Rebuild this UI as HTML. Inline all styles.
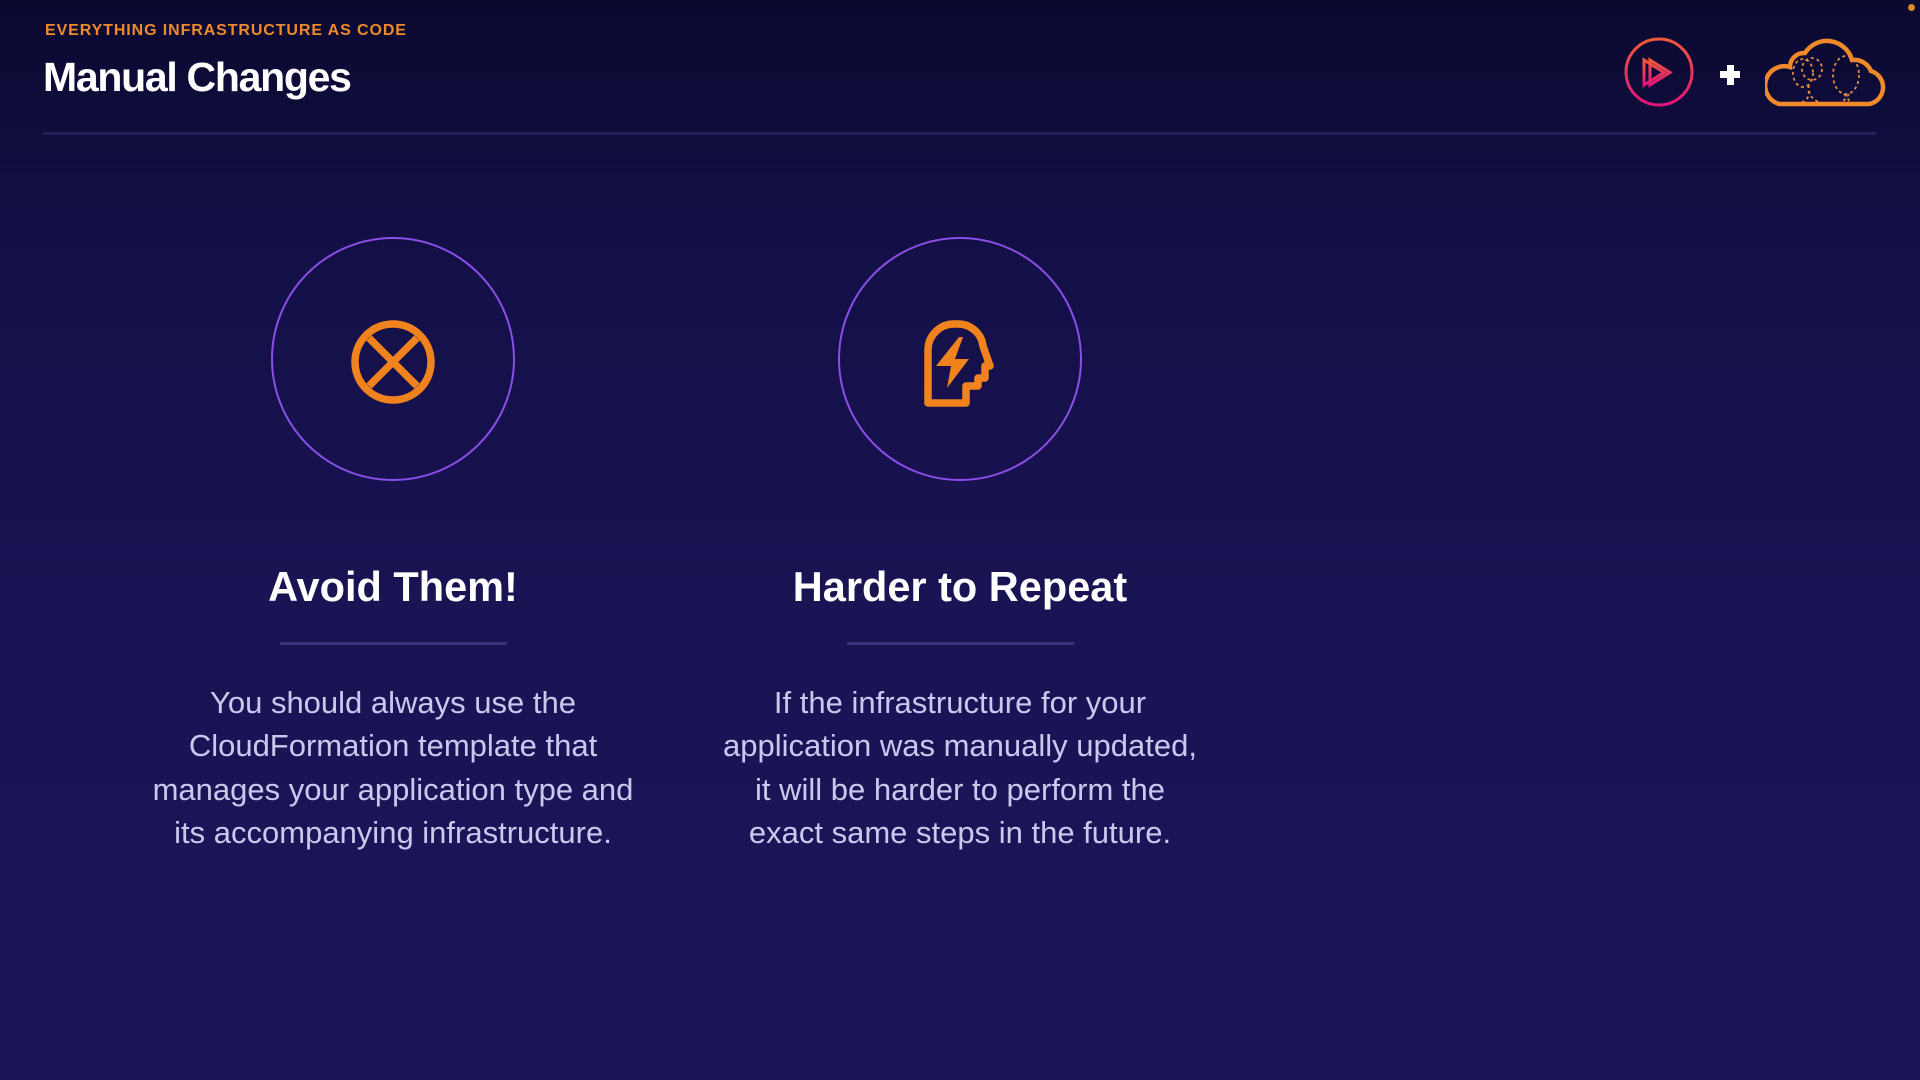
<!DOCTYPE html>
<html><head><meta charset="utf-8"><style>
html,body{margin:0;padding:0}
body{width:1920px;height:1080px;position:relative;overflow:hidden;font-family:"Liberation Sans",sans-serif;
background:linear-gradient(180deg,#0b0930 0%,#141048 25%,#1a1455 60%,#1c1558 100%);}
.sub{position:absolute;left:45px;top:22px;font-size:16px;font-weight:bold;color:#ef8a2a;letter-spacing:0.9px}
.title{position:absolute;left:43px;top:54px;font-size:41px;font-weight:bold;color:#fff;letter-spacing:-1.3px}
.hr{position:absolute;left:43px;top:132px;width:1833px;height:3px;background:#252058}
.circ{position:absolute;width:244px;height:244px;border:2px solid #8b4ee8;border-radius:50%;box-sizing:border-box}
.h{position:absolute;width:600px;text-align:center;font-size:41.5px;font-weight:bold;color:#fff;top:563px}
.sl{position:absolute;top:642px;width:227px;height:3px;background:#39337a}
.p{position:absolute;width:600px;text-align:center;font-size:31px;line-height:43.3px;color:#cbc8ee;top:681px}
</style></head><body>
<div class="sub">EVERYTHING INFRASTRUCTURE AS CODE</div>
<div class="title">Manual Changes</div>
<div class="hr"></div>
<svg style="position:absolute;left:1620px;top:35px" width="80" height="80" viewBox="0 0 80 80">
<defs><linearGradient id="g" x1="0" y1="0" x2="0" y2="1"><stop offset="0" stop-color="#f05a3a"/><stop offset="1" stop-color="#e0157a"/></linearGradient></defs>
<circle cx="39" cy="37" r="33" fill="none" stroke="url(#g)" stroke-width="3"/>
<path d="M24 25 L24 50 L44 37.5 Z" fill="none" stroke="url(#g)" stroke-width="3"/>
<path d="M30 25 L30 50 L50 37.5 Z" fill="none" stroke="url(#g)" stroke-width="3"/>
</svg>
<div style="position:absolute;left:1720px;top:71px;width:20px;height:7px;background:#fff"></div>
<div style="position:absolute;left:1726.5px;top:64.5px;width:7px;height:20px;background:#fff"></div>
<svg style="position:absolute;left:1765px;top:35px" width="125" height="75" viewBox="0 0 125 75">
<path d="M14 69 H104 A17 17 0 0 0 106 36 A18 18 0 0 0 87 25 A26 26 0 0 0 40 18 A14 14 0 0 0 25 32 A19 19 0 0 0 14 69 Z" fill="none" stroke="#f0892a" stroke-width="4.5"/>
<g fill="none" stroke="#e08a45" stroke-width="1.8" stroke-dasharray="3 3">
<ellipse cx="38" cy="38" rx="10" ry="14"/><ellipse cx="47" cy="34" rx="10" ry="11"/>
<path d="M43 50 Q48 62 36 68 M44 50 Q40 60 55 68"/>
<ellipse cx="81" cy="40" rx="13" ry="19"/><path d="M79 59 L86 68 M84 59 L77 68"/>
</g>
</svg>
<div style="position:absolute;left:1908px;top:4px;width:7px;height:7px;border-radius:50%;background:#d98a2c"></div>

<div class="circ" style="left:271px;top:237px"></div>
<svg style="position:absolute;left:343px;top:312px" width="100" height="100" viewBox="0 0 100 100">
<circle cx="50" cy="50" r="38" fill="none" stroke="#f1831f" stroke-width="7.5"/>
<path d="M26 26 L74 74 M74 26 L26 74" stroke="#f1831f" stroke-width="7.5"/>
</svg>
<div class="circ" style="left:838px;top:237px"></div>
<svg style="position:absolute;left:915px;top:318px" width="90" height="95" viewBox="915 318 90 95">
<path d="M928 403 V350 A26 26 0 0 1 954 324 H958 A25 25 0 0 1 983 346 L990 366 H985 V378 H978 V386 H966 V403 Z" fill="none" stroke="#f1831f" stroke-width="7.5" stroke-linejoin="round"/>
<path d="M959 337 L936 366 H951 L947 388 L969 359 H955 L963 337 Z" fill="#f1831f"/>
</svg>

<div class="h" style="left:93px">Avoid Them!</div>
<div class="sl" style="left:280px"></div>
<div class="p" style="left:93px">You should always use the<br>CloudFormation template that<br>manages your application type and<br>its accompanying infrastructure.</div>

<div class="h" style="left:660px">Harder to Repeat</div>
<div class="sl" style="left:847px"></div>
<div class="p" style="left:660px">If the infrastructure for your<br>application was manually updated,<br>it will be harder to perform the<br>exact same steps in the future.</div>
</body></html>
